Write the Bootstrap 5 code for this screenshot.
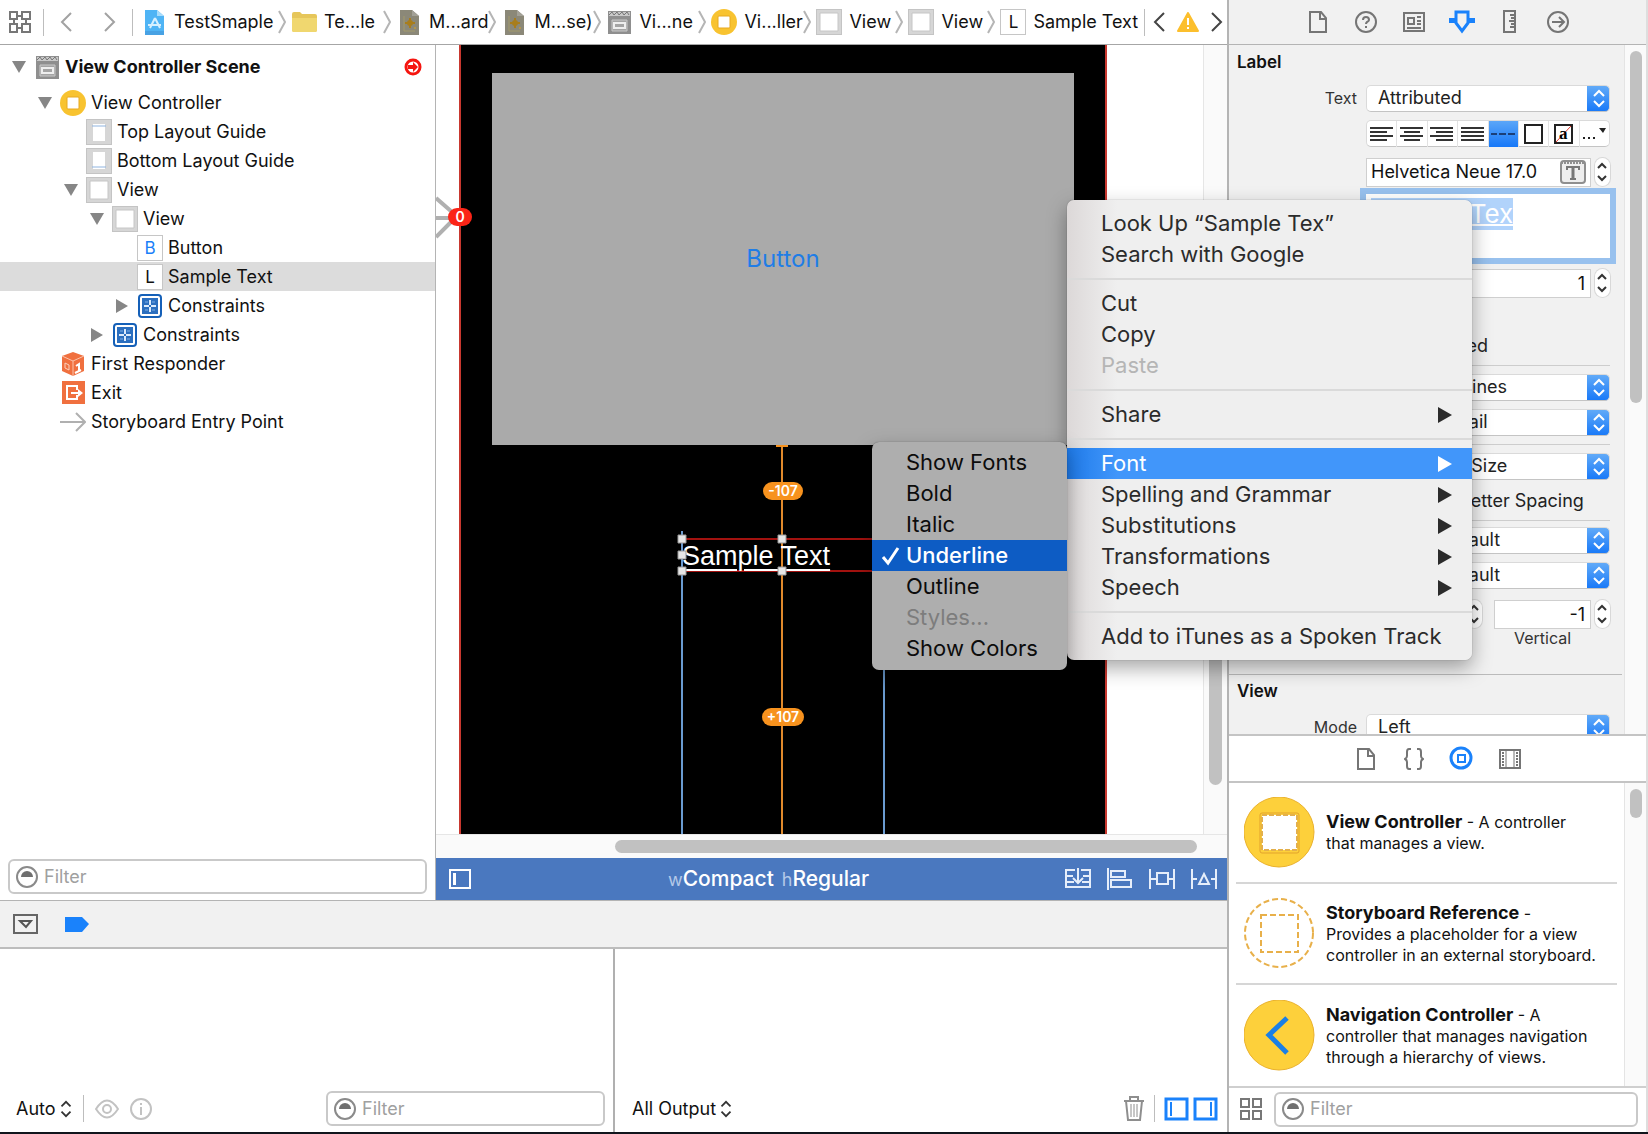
<!DOCTYPE html>
<html lang="en">
<head>
<meta charset="utf-8">
<meta name="viewport" content="width=device-width, initial-scale=1">
<title>TestSmaple – Main.storyboard</title>
<link href="https://cdn.jsdelivr.net/npm/bootstrap@5.3.0/dist/css/bootstrap.min.css" rel="stylesheet">
<style>
:root{--line:#b4b4b4;--chrome:#f1f1f1}
body{font-family:Inter,"Liberation Sans",sans-serif;font-size:18px;line-height:20px;color:#111;background:#fff;overflow:hidden}
svg{display:block;flex:none}
button{font:inherit;color:inherit}
.plain{background:none;border:0;padding:0}
.shell{height:100vh;border-bottom:2px solid #10151c}
.workarea{min-width:0}
.inspector{flex:0 0 420px;border-left:2px solid var(--line);border-right:2px solid #dedede}
.fit{min-height:0}
/* jump bar */
.jump{height:45px;border-bottom:1px solid #a6a6a6;white-space:nowrap;padding-left:9px;padding-right:4px}
.vbar{width:1px;height:27px;background:#bdbdbd;flex:none}
.crumb{flex:0 0 105px;height:27px;color:#111;text-decoration:none}
.crumb-first{flex-basis:150px}
.crumb-view{flex-basis:92px}
.crumb-last{flex-basis:auto}
.slot{width:26px;flex:none;display:flex;justify-content:center}
.crumb .slot,.crumb .tile{margin-right:7px}
.crumb .sep{margin-left:auto;margin-right:5px}
/* outline */
.outline{flex:0 0 436px;border-right:1px solid var(--line)}
.tree-row{height:29px;gap:5px;text-align:left;width:100%;white-space:nowrap}
.tree-row.scene{height:39px;padding:0 13px 3px 12px}
.tree-row .tri{width:14px;height:14px;display:flex;align-items:center;justify-content:center;flex:none}
.tree-row .slot{margin-left:3px}
.lv1{padding-left:38px}.lv2{padding-left:64px}.lv3{padding-left:90px}.lv4{padding-left:115px}
.tree-row.active{background:#dcdcdc}
.tile{width:26px;height:26px;border:1px solid #c6c6c6;background:#fff;display:flex;align-items:center;justify-content:center;font-size:17px;flex:none}
.tile-b{color:#1a7ff9}
.searchbox{height:35px;border:2px solid #c9c9c9;border-radius:6px;background:#fff;padding:0 6px;gap:6px}
.searchbox input{border:0;outline:0;background:none;min-width:0;width:100%;padding:0}
.searchbox input::placeholder{color:#a0a0a0;opacity:1}
.outline .searchbox{margin:0 8px 6px}
.vars .searchbox{width:279px}
/* canvas */
.stage{min-width:0;background:#fff}
.stage-area{overflow:hidden}
.track-x{height:24px;background:#fafafa;border-top:1px solid #e6e6e6;padding:5px 30px 0 179px}
.track-x .thumb{height:13px}
.track-y{width:24px;background:#fafafa;border-left:1px solid #e6e6e6;padding:220px 0 49px 5px}
.track-y .thumb{width:13px}
.thumb{background:#c1c1c1;border-radius:7px}
.phone{left:23px;top:0;width:648px;height:100%;background:#000;border-left:2px solid #c8382f;border-right:2px solid #c8382f}
.grayview{left:56px;top:28px;width:582px;height:372px;background:#aaa;display:flex;align-items:center;justify-content:center}
.grayview button{color:#1f7de6;font-size:24px;line-height:28px}
.sample{left:246px;top:495px;color:#fff;font-family:"Liberation Sans",Arial,sans-serif;font-size:27px;line-height:32px;text-decoration:underline;text-decoration-thickness:2px;text-underline-offset:4px;white-space:nowrap}
.pill{background:#f7921e;color:#fff;border-radius:9px;height:18px;font-size:14px;line-height:18px;font-weight:600;text-align:center;width:42px}
.pill-a{left:327px;top:437px;width:40px}.pill-b{left:326px;top:663px}
.issue{left:12px;top:163px;width:24px;height:18px;border-radius:9px;background:#fb2417;color:#fff;font-size:14px;line-height:18px;font-weight:600;text-align:center}
.sizebar{height:42px;background:#4a78bf;color:#fff;font-size:21px;line-height:24px;font-weight:500;padding:0 10px 0 12px}
.sizebar .dim{font-size:18px;color:#b4c9e8;font-weight:400}
.tools{gap:16px}
/* debug */
.debugbar{height:49px;background:var(--chrome);border-top:1px solid var(--line);border-bottom:2px solid #bdbdbd;padding-left:13px;gap:27px}
.debug{height:183px}
.vars{flex:0 0 615px;border-right:2px solid #b0b0b0;padding:0 8px 6px 16px}
.console{padding:0 9px 6px 17px;min-width:0}
.strip{height:35px;gap:11px}
.console .strip{gap:9px}
/* inspector */
.tabs-top{height:45px;background:var(--chrome);border-bottom:1px solid var(--line);gap:21px;color:#757575}
.tabs-lib{height:47px;border-bottom:2px solid #c4c4c4;gap:21px;color:#757575}
.tabs-top .slot,.tabs-lib .slot{width:27px}
.attrs{background:var(--chrome);overflow:hidden}
.attrs-body{padding:7px 14px 0 8px;min-width:0}
.rail{flex:0 0 22px;background:#fafafa;border-left:1px solid #e4e4e4;padding:6px 4px 0 5px}
.thumb-long{height:352px}
.thumb-short{height:29px}
.head{font-size:17px;font-weight:600;line-height:20px;margin:0}
.frow{gap:9px}
.frow>label,.frow>.lab{flex:0 0 120px;text-align:right;font-size:16px;color:#333}
.frow>.ctl{flex:0 0 244px}
.pick{appearance:none;border:1px solid #dadada;border-bottom-color:#c4c4c4;border-radius:5px;height:27px;width:100%;padding:0 30px 0 11px;background:#fff url("data:image/svg+xml,%3Csvg xmlns='http://www.w3.org/2000/svg' width='23' height='27'%3E%3Cdefs%3E%3ClinearGradient id='g' x2='0' y2='1'%3E%3Cstop stop-color='%2364acf8'/%3E%3Cstop offset='1' stop-color='%231778f8'/%3E%3C/linearGradient%3E%3C/defs%3E%3Cpath fill='url(%23g)' d='M0 0h23v27H0z'/%3E%3Cpath d='M7 11l5-5 5 5M7 16l5 5 5-5' fill='none' stroke='%23fff' stroke-width='2'/%3E%3C/svg%3E") no-repeat right center;background-origin:border-box;color:#222;line-height:20px}
.pick-swatch{padding-left:72px}
.field{height:29px;border:1px solid #cfcfcf;background:#fff;min-width:0;gap:4px}
.field input,.num{border:0;outline:0;padding:0 5px;min-width:0;width:100%;background:none;color:#111}
.field input{padding:0 0 0 4px}
.num{border:1px solid #cfcfcf;background:#fff;height:29px;text-align:right}
.step{width:15px;height:28px;border-radius:8px;background:#fff;border:0;padding:0;box-shadow:0 0 0 1px #d8d8d8;flex:none;display:flex;align-items:center;justify-content:center}
.seg{height:27px;background:#fff;border-radius:5px;border:1px solid #dadada;border-bottom-color:#c4c4c4}
.seg button{flex:1 1 0;height:26px;border:0;border-right:1px solid #e2e2e2;background:none;padding:0;display:flex;align-items:center;justify-content:center}
.seg button:last-child{border-right:0}
.seg button.on{background:linear-gradient(#5ba6f8,#1778f8)}
.rich{height:64px;background:#fff;box-shadow:0 0 0 6px #98c1ee;padding:4px 5px;font-size:26px;line-height:32px;color:#fff;overflow:hidden}
.rich span{background:#b1d3fb;text-decoration:underline;text-decoration-thickness:2px;display:inline-block}
.rule{height:1px;background:#cdcdcd}
.rule-full{margin-left:-8px;margin-right:-12px;background:#bbb}
.caps{padding-right:19px}
.cap{font-size:16px;line-height:18px;width:97px;text-align:center;color:#333}
.chk{height:24px;gap:8px;white-space:nowrap;color:#222}
.chk input{width:17px;height:17px;margin:0}
.t6{margin-top:6px}.t7{margin-top:7px}.t8{margin-top:8px}.t9{margin-top:9px}.t11{margin-top:11px}.t13{margin-top:13px}.t27{margin-top:27px}
/* library */
.library{flex:0 0 393px;border-top:2px solid #c4c4c4;background:#fff}
.libitem{height:101px;margin:0 7px;border-bottom:2px solid #d6d6d6;gap:11px;padding-left:8px;font-size:16px;line-height:21px;color:#111}
.libitem strong{font-size:18px;font-weight:700}
.libfoot{height:46px;border-top:2px solid #cfcfcf;padding:0 8px 2px 11px;gap:12px}
/* context menus */
.ctx{display:block;border:0;min-width:0;border-radius:7px;font-size:22px;line-height:31px;box-shadow:0 8px 20px rgba(0,0,0,.35),0 0 1px rgba(0,0,0,.5);z-index:20}
.ctx .dropdown-item{height:31px;padding:0 20px 0 34px;font-size:22px;line-height:31px;color:#2b2b2b;display:flex;align-items:center;justify-content:space-between}
.ctx .dropdown-item:disabled{color:#b5b5b5}
.ctx .dropdown-divider{height:2px;margin:8px 0;border:0;background:#dadada;opacity:1}
.ctx-main{left:1067px;top:200px;width:405px;padding:8px 0;background:linear-gradient(90deg,#dcd8d8,#efefef 50px)}
.ctx-main .dropdown-item.active{background:linear-gradient(90deg,#1f7bea,#4196fa 50px);color:#fff}
.ctx-sub{left:872px;top:442px;width:195px;padding:5px 0 6px;background:#aeaeae}
.ctx-sub .dropdown-item{color:#0c0c0c}
.ctx-sub .dropdown-item:disabled{color:#7d7d7d}
.ctx-sub .dropdown-item.active{background:#0d5cc4;color:#fff;padding-left:9px;justify-content:flex-start;gap:5px;font-weight:500}
</style>
<script src="https://cdn.jsdelivr.net/npm/bootstrap@5.3.0/dist/js/bootstrap.bundle.min.js"></script>
</head>
<body>
<svg width="0" height="0" class="position-absolute" aria-hidden="true">
<defs>
<symbol id="chev" viewBox="0 0 8 24"><path d="M1 1l6 11-6 11" fill="none" stroke="#b5b5b5" stroke-width="2"/></symbol>
<symbol id="doc" viewBox="0 0 19 25"><path d="M0 0h12l7 6v19H0z" fill="#8b8878"/><path d="M12 0l7 6h-7z" fill="#a3a197"/><path d="M4 6v15h11" fill="none" stroke="#a39a6a"/><circle cx="10" cy="13" r="3" fill="#a87d1c"/><path d="M9 8h2v10H9zM5 12h10v2H5z" fill="#a87d1c"/><circle cx="15" cy="18" r="1" fill="#c09a3c"/></symbol>
<symbol id="clap" viewBox="0 0 23 23"><path d="M0 0h23v23H0z" fill="#8f8f8f"/><path d="M1 1h21v4H1z" fill="#c9c9c9"/><path d="M1 4l3-3 2 3 3-3 2 3 3-3 2 3 3-3 2 3" stroke="#777" fill="none"/><path d="M4 9h15v11H4z" fill="#a4a4a4" stroke="#c8c8c8"/><rect x="6" y="12" width="11" height="5" fill="none" stroke="#eee" stroke-width="2"/></symbol>
<symbol id="vc" viewBox="0 0 26 26"><circle cx="13" cy="13" r="13" fill="#f8c330"/><rect x="7" y="7" width="12" height="12" rx="1" fill="#fff" stroke="#e8a91f"/></symbol>
<symbol id="box" viewBox="0 0 26 26"><path d="M0 0h26v26H0z" fill="#c4c4c4"/><path d="M1 1h24v24H1z" fill="#d6d6d6"/><path d="M4 4h18v18H4z" fill="#fff" stroke="#c6c6c6"/></symbol>
<symbol id="guidetop" viewBox="0 0 26 26"><path d="M0 0h26v26H0z" fill="#c4c4c4"/><path d="M1 1h24v24H1z" fill="#d6d6d6"/><path d="M7 5h12v17H7z" fill="#fff"/><path d="M6 7h14" stroke="#8fb4e0"/></symbol>
<symbol id="guidebot" viewBox="0 0 26 26"><path d="M0 0h26v26H0z" fill="#c4c4c4"/><path d="M1 1h24v24H1z" fill="#d6d6d6"/><path d="M7 4h12v17H7z" fill="#fff"/><path d="M6 19h14" stroke="#8fb4e0"/></symbol>
<symbol id="cons" viewBox="0 0 24 24"><rect width="24" height="24" rx="4" fill="#1560b8"/><rect x="3" y="3" width="18" height="18" rx="1" fill="#2c6fbf" stroke="#fff" stroke-width="2"/><path d="M12 6v12M6 12h12" stroke="#dcebfb" stroke-width="2" stroke-dasharray="5 2"/><path d="M7 8h3M14 8h3M7 16h3M14 16h3" stroke="#7fb0e6"/></symbol>
<symbol id="down" viewBox="0 0 14 12"><path d="M0 0h14L7 12z" fill="#868686"/></symbol>
<symbol id="right" viewBox="0 0 12 14"><path d="M0 0l12 7-12 7z" fill="#868686"/></symbol>
<symbol id="filt" viewBox="0 0 22 22"><circle cx="11" cy="11" r="10" fill="none" stroke="#8a8a8a" stroke-width="2"/><path d="M5 11a6 6 0 0 1 12 0z" fill="#6f6f6f"/></symbol>
<symbol id="updn" viewBox="0 0 12 20"><path d="M1 7l5-5 5 5M1 13l5 5 5-5" fill="none" stroke="#333" stroke-width="2"/></symbol>
<symbol id="stp" viewBox="0 0 11 20"><path d="M1 6l4-4 4 4M1 14l4 4 4-4" fill="none" stroke="#333" stroke-width="2"/></symbol>
<symbol id="page" viewBox="0 0 20 24"><path d="M2 2h11l5 6v14H2z" fill="none" stroke="currentColor" stroke-width="2"/><path d="M12 2v7h6" fill="none" stroke="currentColor" stroke-width="2"/></symbol>
<symbol id="play" viewBox="0 0 14 16"><path d="M0 0l14 8-14 8z" fill="currentColor"/></symbol>
</defs>
</svg>

<div class="shell d-flex">
<div class="workarea d-flex flex-column flex-grow-1">
  <nav class="jump d-flex align-items-center" aria-label="Jump bar">
    <button class="plain me-2" aria-label="Related items"><svg width="22" height="22" viewBox="0 0 22 22" fill="none" stroke="#777" stroke-width="2"><path d="M1 1h7v7H1zM13 1h8v7h-8zM1 13h7v8H1zM13 13h8v8h-8zM8 5h5M8 17h5M5 8v5M17 8v5"/></svg></button>
    <span class="vbar mx-1"></span>
    <button class="plain ms-2 ps-1" aria-label="Back"><svg width="12" height="20" viewBox="0 0 12 20"><path d="M11 1L2 10l9 9" fill="none" stroke="#a2a2a2" stroke-width="2"/></svg></button>
    <button class="plain ms-4 ps-2" aria-label="Forward"><svg width="12" height="20" viewBox="0 0 12 20"><path d="M1 1l9 9-9 9" fill="none" stroke="#a2a2a2" stroke-width="2"/></svg></button>
    <span class="vbar ms-3 me-2"></span>
    <a href="#" class="crumb crumb-first d-flex align-items-center"><span class="slot"><svg width="19" height="25" viewBox="0 0 19 25"><path d="M0 0h12l7 6v19H0z" fill="#4fb4f5"/><path d="M12 0l7 6h-7z" fill="#a8dcfb"/><path d="M10 8L5 18M10 8l5 10M3 15h13" stroke="#d6f0ff" stroke-width="2" fill="none"/><path d="M0 21h19v4H0z" fill="#48a2e4"/></svg></span>TestSmaple<svg class="sep" width="8" height="24"><use href="#chev"/></svg></a>
    <a href="#" class="crumb d-flex align-items-center"><span class="slot"><svg width="25" height="20" viewBox="0 0 25 20"><path d="M0 2q0-2 2-2h6l2 2h13q2 0 2 2v14q0 2-2 2H2q-2 0-2-2z" fill="#e6c65a"/><path d="M0 6h25v12q0 2-2 2H2q-2 0-2-2z" fill="#f0d76f"/></svg></span>Te...le<svg class="sep" width="8" height="24"><use href="#chev"/></svg></a>
    <a href="#" class="crumb d-flex align-items-center"><span class="slot"><svg width="19" height="25"><use href="#doc"/></svg></span>M...ard<svg class="sep" width="8" height="24"><use href="#chev"/></svg></a>
    <a href="#" class="crumb d-flex align-items-center"><span class="slot"><svg width="19" height="25"><use href="#doc"/></svg></span>M...se)<svg class="sep" width="8" height="24"><use href="#chev"/></svg></a>
    <a href="#" class="crumb d-flex align-items-center"><span class="slot"><svg width="23" height="23"><use href="#clap"/></svg></span>Vi...ne<svg class="sep" width="8" height="24"><use href="#chev"/></svg></a>
    <a href="#" class="crumb d-flex align-items-center"><span class="slot"><svg width="26" height="26"><use href="#vc"/></svg></span>Vi...ller<svg class="sep" width="8" height="24"><use href="#chev"/></svg></a>
    <a href="#" class="crumb crumb-view d-flex align-items-center"><span class="slot"><svg width="26" height="26"><use href="#box"/></svg></span>View<svg class="sep" width="8" height="24"><use href="#chev"/></svg></a>
    <a href="#" class="crumb crumb-view d-flex align-items-center"><span class="slot"><svg width="26" height="26"><use href="#box"/></svg></span>View<svg class="sep" width="8" height="24"><use href="#chev"/></svg></a>
    <a href="#" class="crumb crumb-last d-flex align-items-center"><span class="tile">L</span>Sample Text</a>
    <span class="vbar ms-auto me-2"></span>
    <button class="plain" aria-label="Previous issue"><svg width="12" height="20" viewBox="0 0 12 20"><path d="M11 1L2 10l9 9" fill="none" stroke="#444" stroke-width="2"/></svg></button>
    <button class="plain mx-2 px-1" aria-label="Warnings"><svg width="22" height="20" viewBox="0 0 22 20"><path d="M11 1l10 18H1z" fill="#fcbf2d" stroke="#fcbf2d" stroke-width="2" stroke-linejoin="round"/><path d="M10 6h2v7h-2zM10 15h2v2h-2z" fill="#fff"/></svg></button>
    <button class="plain" aria-label="Next issue"><svg width="12" height="20" viewBox="0 0 12 20"><path d="M1 1l9 9-9 9" fill="none" stroke="#444" stroke-width="2"/></svg></button>
  </nav>

  <div class="fit d-flex flex-grow-1">
    <aside class="outline d-flex flex-column">
      <div class="pt-1 flex-grow-1">
        <button class="plain tree-row scene d-flex align-items-center fw-bold"><span class="tri"><svg width="14" height="12"><use href="#down"/></svg></span><span class="slot"><svg width="23" height="23"><use href="#clap"/></svg></span>View Controller Scene
          <svg class="ms-auto" width="18" height="18" viewBox="0 0 18 18"><circle cx="9" cy="9" r="7" fill="#fff" stroke="#f5150f" stroke-width="3"/><path d="M4 7h5V4l5 5-5 5v-3H4z" fill="#f5150f"/></svg></button>
        <button class="plain tree-row lv1 d-flex align-items-center"><span class="tri"><svg width="14" height="12"><use href="#down"/></svg></span><span class="slot"><svg width="26" height="26"><use href="#vc"/></svg></span>View Controller</button>
        <button class="plain tree-row lv2 d-flex align-items-center"><span class="tri"></span><span class="slot"><svg width="26" height="26"><use href="#guidetop"/></svg></span>Top Layout Guide</button>
        <button class="plain tree-row lv2 d-flex align-items-center"><span class="tri"></span><span class="slot"><svg width="26" height="26"><use href="#guidebot"/></svg></span>Bottom Layout Guide</button>
        <button class="plain tree-row lv2 d-flex align-items-center"><span class="tri"><svg width="14" height="12"><use href="#down"/></svg></span><span class="slot"><svg width="26" height="26"><use href="#box"/></svg></span>View</button>
        <button class="plain tree-row lv3 d-flex align-items-center"><span class="tri"><svg width="14" height="12"><use href="#down"/></svg></span><span class="slot"><svg width="26" height="26"><use href="#box"/></svg></span>View</button>
        <button class="plain tree-row lv4 d-flex align-items-center"><span class="tri"></span><span class="slot"><span class="tile tile-b">B</span></span>Button</button>
        <button class="plain tree-row lv4 active d-flex align-items-center"><span class="tri"></span><span class="slot"><span class="tile">L</span></span>Sample Text</button>
        <button class="plain tree-row lv4 d-flex align-items-center"><span class="tri"><svg width="12" height="14"><use href="#right"/></svg></span><span class="slot"><svg width="24" height="24"><use href="#cons"/></svg></span>Constraints</button>
        <button class="plain tree-row lv3 d-flex align-items-center"><span class="tri"><svg width="12" height="14"><use href="#right"/></svg></span><span class="slot"><svg width="24" height="24"><use href="#cons"/></svg></span>Constraints</button>
        <button class="plain tree-row lv1 d-flex align-items-center"><span class="tri"></span><span class="slot"><svg width="24" height="24" viewBox="0 0 24 24"><path d="M12 0l11 4v15l-11 5L1 19V4z" fill="#f0703f"/><path d="M1 4l11 5 11-5M12 9v15" stroke="#fbc3ab" fill="none"/><path d="M15 14l3-2v7M14 21l6-3" stroke="#fff" stroke-width="2" fill="none"/><path d="M4 11l4 2v5l-4-2z" stroke="#fbd0bd" fill="none"/></svg></span>First Responder</button>
        <button class="plain tree-row lv1 d-flex align-items-center"><span class="tri"></span><span class="slot"><svg width="23" height="23" viewBox="0 0 23 23"><path d="M0 0h23v23H0z" fill="#f0703f"/><path d="M15 9V5H5v13h10v-4M9 12h9" stroke="#fff" stroke-width="2" fill="none"/><path d="M16 8l5 4-5 4z" fill="#fff"/></svg></span>Exit</button>
        <button class="plain tree-row lv1 d-flex align-items-center"><span class="tri"></span><span class="slot"><svg width="26" height="20" viewBox="0 0 26 20"><path d="M0 10h24M16 1l9 9-9 9" fill="none" stroke="#b0b0b0" stroke-width="2"/></svg></span>Storyboard Entry Point</button>
      </div>
      <label class="searchbox d-flex align-items-center"><svg width="22" height="22"><use href="#filt"/></svg><input type="text" placeholder="Filter" aria-label="Filter outline"></label>
    </aside>

    <main class="stage d-flex flex-column flex-grow-1">
      <div class="fit d-flex flex-grow-1">
        <div class="stage-area position-relative flex-grow-1">
          <div class="phone position-absolute"></div>
          <div class="grayview position-absolute"><button class="plain">Button</button></div>
          <svg class="position-absolute top-0 start-0" width="700" height="100%">
            <path d="M0 153l16 14M0 173h16M0 192l16-16" stroke="#b0b0b0" stroke-width="4" fill="none"/>
            <path d="M246 486V1200M448 620V1200" stroke="#6a9bd0" stroke-width="2"/>
            <path d="M246 494h202M246 526h202" stroke="#a3120f" stroke-width="2"/>
            <path d="M346 400V1200" stroke="#e08a2c" stroke-width="2"/><path d="M340 400h12v2h-12z" fill="#f7921e"/>
          </svg>
          <div class="sample position-absolute">Sample Text</div>
          <svg class="position-absolute top-0 start-0" width="700" height="600" fill="#e6e6e6" stroke="#999"><path d="M242 490h8v8h-8zM342 490h8v8h-8zM242 506h8v8h-8zM242 522h8v8h-8zM342 522h8v8h-8z"/></svg>
          <span class="pill pill-a position-absolute">-107</span>
          <span class="pill pill-b position-absolute">+107</span>
          <span class="issue position-absolute">0</span>
        </div>
        <div class="track-y d-flex"><div class="thumb"></div></div>
      </div>
      <div class="track-x"><div class="thumb"></div></div>
      <div class="sizebar d-flex align-items-center">
        <button class="plain" aria-label="Show outline"><svg width="24" height="20" viewBox="0 0 24 20"><path d="M2 1h20v18H2z" fill="none" stroke="#fff" stroke-width="2"/><path d="M5 4h3v12H5z" fill="#fff"/></svg></button>
        <button class="plain mx-auto d-flex align-items-baseline gap-2"><span><span class="dim">w</span>Compact</span><span><span class="dim">h</span>Regular</span></button>
        <div class="tools d-flex align-items-center">
          <button class="plain" aria-label="Stack"><svg width="26" height="22" viewBox="0 0 26 22" fill="none" stroke="#e6eefa" stroke-width="2"><path d="M10 2H1v17h24V2h-9M1 8h7M1 14h8M18 8h7M17 14h8M13 0v15M8 10l5 5 5-5"/></svg></button>
          <button class="plain" aria-label="Align"><svg width="26" height="22" viewBox="0 0 26 22" fill="none" stroke="#e6eefa" stroke-width="2"><path d="M1 0v22M4 3h14v6H4zM4 12h20v7H4z"/></svg></button>
          <button class="plain" aria-label="Pin"><svg width="26" height="22" viewBox="0 0 26 22" fill="none" stroke="#e6eefa" stroke-width="2"><path d="M1 1v20M25 1v20M1 11h6M19 11h6M8 5h11v11H8z"/></svg></button>
          <button class="plain" aria-label="Resolve"><svg width="26" height="22" viewBox="0 0 26 22" fill="none" stroke="#e6eefa" stroke-width="2"><path d="M1 1v20M25 1v20M1 11h5M20 11h5M13 6l5 10H8z"/></svg></button>
        </div>
      </div>
    </main>
  </div>

  <div class="debugbar d-flex align-items-center">
    <button class="plain" aria-label="Hide debug area"><svg width="25" height="20" viewBox="0 0 25 20"><path d="M1 1h23v18H1z" fill="none" stroke="#666" stroke-width="2"/><path d="M7 7h11l-5 6z" fill="none" stroke="#555" stroke-width="2"/></svg></button>
    <button class="plain" aria-label="Breakpoints"><svg width="24" height="15" viewBox="0 0 24 15"><path d="M0 0h17l7 7-7 8H0z" fill="#1a82fb"/></svg></button>
  </div>
  <div class="debug d-flex">
    <section class="vars d-flex align-items-end">
      <div class="strip d-flex align-items-center w-100">
        <button class="plain d-flex align-items-center gap-1">Auto <svg width="12" height="18"><use href="#updn"/></svg></button>
        <span class="vbar"></span>
        <button class="plain" aria-label="Quick look"><svg width="24" height="20" viewBox="0 0 24 20" fill="none" stroke="#c2c2c2" stroke-width="2"><path d="M1 10q11-17 22 0q-11 17-22 0z"/><circle cx="12" cy="10" r="4"/></svg></button>
        <button class="plain" aria-label="Info"><svg width="22" height="22" viewBox="0 0 22 22" fill="none" stroke="#c2c2c2" stroke-width="2"><circle cx="11" cy="11" r="10"/><path d="M11 9v8M11 5v2"/></svg></button>
        <label class="searchbox d-flex align-items-center ms-auto"><svg width="22" height="22"><use href="#filt"/></svg><input type="text" placeholder="Filter" aria-label="Filter variables"></label>
      </div>
    </section>
    <section class="console d-flex align-items-end flex-grow-1">
      <div class="strip d-flex align-items-center w-100">
        <button class="plain d-flex align-items-center gap-1">All Output <svg width="12" height="18"><use href="#updn"/></svg></button>
        <button class="plain ms-auto" aria-label="Clear"><svg width="22" height="25" viewBox="0 0 22 25" fill="none" stroke="#8e8e8e" stroke-width="2"><path d="M1 5h20M7 5V1h8v4M3 5l2 19h12l2-19"/><path d="M8 8v13M11 8v13M14 8v13" stroke-width="1"/></svg></button>
        <span class="vbar"></span>
        <span class="d-flex gap-1"><button class="plain" aria-label="Variables"><svg width="25" height="24" viewBox="0 0 25 24"><path d="M2 2h21v20H2z" fill="none" stroke="#1a82fb" stroke-width="3"/><path d="M6 5h2v14H6z" fill="#1a82fb"/></svg></button>
        <button class="plain" aria-label="Console"><svg width="25" height="24" viewBox="0 0 25 24"><path d="M2 2h21v20H2z" fill="none" stroke="#1a82fb" stroke-width="3"/><path d="M17 5h2v14h-2z" fill="#1a82fb"/></svg></button></span>
      </div>
    </section>
  </div>
</div>

<aside class="inspector d-flex flex-column">
  <div class="tabs-top d-flex align-items-center justify-content-center">
    <button class="plain slot" aria-label="File"><svg width="20" height="24"><use href="#page"/></svg></button>
    <button class="plain slot" aria-label="Help"><svg width="22" height="22" viewBox="0 0 22 22" fill="none" stroke="currentColor" stroke-width="2"><circle cx="11" cy="11" r="10"/><path d="M8 9q0-3 3-3t3 3q0 1-2 2-1 1-1 2M11 15v2"/></svg></button>
    <button class="plain slot" aria-label="Identity"><svg width="22" height="20" viewBox="0 0 22 20" fill="none" stroke="currentColor" stroke-width="2"><path d="M1 1h20v18H1z"/><path d="M5 6h6v6H5zM14 5h4M14 9h4M14 12h4M4 16h14"/></svg></button>
    <button class="plain slot" aria-label="Attributes"><svg width="26" height="24" viewBox="0 0 26 24" fill="none" stroke="#1a82fb" stroke-width="3"><path d="M7 2h12v11l-6 8-6-8z"/><path d="M0 8h7v5H0zM19 8h7v5h-7z" fill="#1a82fb" stroke="none"/></svg></button>
    <button class="plain slot" aria-label="Size"><svg width="13" height="23" viewBox="0 0 13 23" fill="none" stroke="currentColor" stroke-width="2"><path d="M1 1h11v21H1zM7 5h5M8 8h4M6 11h6M8 14h4M7 17h5"/></svg></button>
    <button class="plain slot" aria-label="Connections"><svg width="22" height="22" viewBox="0 0 22 22" fill="none" stroke="currentColor" stroke-width="2"><circle cx="11" cy="11" r="10"/><path d="M5 11h11M12 6l5 5-5 5"/></svg></button>
  </div>
  <div class="attrs fit d-flex flex-grow-1">
    <div class="attrs-body flex-grow-1">
      <h2 class="head">Label</h2>
      <div class="frow d-flex align-items-center t13"><label for="f1">Text</label><div class="ctl"><select id="f1" class="pick"><option>Attributed</option></select></div></div>
      <div class="frow d-flex align-items-center t8"><span class="lab"></span><div class="ctl seg d-flex" role="group" aria-label="Alignment">
        <button aria-label="Left"><svg width="24" height="14" viewBox="0 0 24 14" stroke="#333" stroke-width="2"><path d="M0 1h23M0 5h17M0 9h23M0 13h17"/></svg></button>
        <button aria-label="Center"><svg width="24" height="14" viewBox="0 0 24 14" stroke="#333" stroke-width="2"><path d="M0 1h23M4 5h16M0 9h23M4 13h16"/></svg></button>
        <button aria-label="Right"><svg width="24" height="14" viewBox="0 0 24 14" stroke="#333" stroke-width="2"><path d="M0 1h23M6 5h17M0 9h23M6 13h17"/></svg></button>
        <button aria-label="Justified"><svg width="24" height="14" viewBox="0 0 24 14" stroke="#333" stroke-width="2"><path d="M0 1h23M0 5h23M0 9h23M0 13h23"/></svg></button>
        <button class="on" aria-label="Natural"><svg width="24" height="4" viewBox="0 0 24 4" stroke="#1b3f78" stroke-width="2"><path d="M0 2h6M8 2h7M17 2h7"/></svg></button>
        <button aria-label="Text color"><svg width="19" height="20" viewBox="0 0 19 20"><path d="M1 1h17v18H1z" fill="#fff" stroke="#222" stroke-width="2"/></svg></button>
        <button aria-label="Background color"><svg width="19" height="20" viewBox="0 0 19 20"><path d="M2 18L17 2" stroke="#e23b30" stroke-width="1"/><path d="M1 1h17v18H1z" fill="none" stroke="#222" stroke-width="2"/><text x="5" y="15" font-family="Liberation Serif" font-weight="bold" font-size="17">a</text></svg></button>
        <button aria-label="More"><svg width="24" height="16" viewBox="0 0 24 16" fill="#222"><path d="M1 11h2v2H1zM6 11h2v2H6zM11 11h2v2h-2zM17 2h7l-3 5z"/></svg></button>
      </div></div>
      <div class="frow d-flex align-items-center t11"><span class="lab"></span><div class="ctl d-flex align-items-center gap-1"><div class="field d-flex align-items-center flex-grow-1 pe-1"><input type="text" value="Helvetica Neue 17.0" aria-label="Font"><svg width="26" height="24" viewBox="0 0 26 24"><rect x="1" y="1" width="24" height="22" rx="3" fill="#eee" stroke="#8f8f8f" stroke-width="2"/><path d="M1 3h24" stroke="#8f8f8f" stroke-width="2" stroke-dasharray="2 1"/><path d="M7 10V7h12v3M10 19h6" fill="none" stroke="#777" stroke-width="2"/><path d="M13 7v12" stroke="#777" stroke-width="3"/></svg></div><button class="step" aria-label="Font size"><svg width="11" height="20"><use href="#stp"/></svg></button></div></div>
      <div class="frow d-flex t7"><span class="lab"></span><div class="ctl rich" contenteditable="true" role="textbox" aria-label="Attributed text"><span>Sample Tex</span>t</div></div>
      <div class="frow d-flex align-items-center t11"><label for="f2">Lines</label><div class="ctl d-flex align-items-center gap-1"><input id="f2" class="num" type="text" value="1"><button class="step" aria-label="Lines"><svg width="11" height="20"><use href="#stp"/></svg></button></div></div>
      <div class="frow d-flex t8"><span class="lab">Behavior</span><div class="ctl"><label class="chk d-flex align-items-center"><input type="checkbox" checked>Enabled</label></div></div>
      <div class="frow d-flex mt-1"><span class="lab"></span><div class="ctl"><label class="chk d-flex align-items-center"><input type="checkbox">Highlighted</label></div></div>
      <div class="rule t7"></div>
      <div class="frow d-flex align-items-center t8"><label for="f3">Baseline</label><div class="ctl"><select id="f3" class="pick"><option>Align Baselines</option></select></div></div>
      <div class="frow d-flex align-items-center t8"><label for="f4">Line Breaks</label><div class="ctl"><select id="f4" class="pick"><option>Truncate Tail</option></select></div></div>
      <div class="rule t8"></div>
      <div class="frow d-flex align-items-center t8"><label for="f5">Autoshrink</label><div class="ctl"><select id="f5" class="pick"><option>Fixed Font Size</option></select></div></div>
      <div class="frow d-flex t9"><span class="lab"></span><div class="ctl"><label class="chk d-flex align-items-center"><input type="checkbox">Tighten Letter Spacing</label></div></div>
      <div class="rule t7"></div>
      <div class="frow d-flex align-items-center t6"><label for="f6">Highlighted</label><div class="ctl"><select id="f6" class="pick pick-swatch"><option>Default</option></select></div></div>
      <div class="frow d-flex align-items-center t8"><label for="f7">Shadow</label><div class="ctl"><select id="f7" class="pick pick-swatch"><option>Default</option></select></div></div>
      <div class="frow d-flex align-items-center t11"><span class="lab"></span><div class="ctl d-flex align-items-center gap-1"><input class="num" type="text" value="0" aria-label="Horizontal"><button class="step" aria-label="Horizontal"><svg width="11" height="20"><use href="#stp"/></svg></button><span class="ps-1"></span><input id="f9" class="num" type="text" value="-1"><button class="step" aria-label="Vertical"><svg width="11" height="20"><use href="#stp"/></svg></button></div></div>
      <div class="frow d-flex"><span class="lab"></span><div class="ctl caps d-flex justify-content-end"><label for="f9" class="cap">Vertical</label></div></div>
      <div class="rule rule-full t27"></div>
      <h2 class="head t6">View</h2>
      <div class="frow d-flex align-items-center t13"><label for="f8">Mode</label><div class="ctl"><select id="f8" class="pick"><option>Left</option></select></div></div>
    </div>
    <div class="rail"><div class="thumb thumb-long"></div></div>
  </div>

  <div class="library d-flex flex-column">
    <div class="tabs-lib d-flex align-items-center justify-content-center flex-shrink-0">
      <button class="plain slot" aria-label="File templates"><svg width="20" height="24"><use href="#page"/></svg></button>
      <button class="plain slot" aria-label="Code snippets"><svg width="20" height="22" viewBox="0 0 20 22" fill="none" stroke="currentColor" stroke-width="2"><path d="M7 1H5Q3 1 3 4v4q0 2-2 3 2 1 2 3v4q0 3 2 3h2M13 1h2q2 0 2 3v4q0 2 2 3-2 1-2 3v4q0 3-2 3h-2"/></svg></button>
      <button class="plain slot" aria-label="Objects"><svg width="25" height="25" viewBox="0 0 25 25" fill="none" stroke="#1a82fb"><circle cx="12" cy="12" r="10" stroke-width="3"/><path d="M9 9h7v7H9z" stroke-width="2"/></svg></button>
      <button class="plain slot" aria-label="Media"><svg width="22" height="20" viewBox="0 0 22 20" fill="none" stroke="currentColor"><path d="M1 1h20v18H1z" stroke-width="2"/><path d="M4 3v14M18 3v14" stroke-width="2" stroke-dasharray="2 1"/><path d="M7 2v16M15 2v16"/></svg></button>
    </div>
    <div class="d-flex flex-grow-1 overflow-hidden">
      <div class="flex-grow-1">
        <div class="libitem d-flex align-items-center"><svg width="71" height="71" viewBox="0 0 71 71"><circle cx="35" cy="35" r="35" fill="#fdd03b" stroke="#eab12c"/><rect x="16" y="16" width="39" height="40" rx="2" fill="none" stroke="#e3a32c"/><path d="M18 18h35v35H18z" fill="#fff" stroke="#e3b04c" stroke-width="2" stroke-dasharray="5 2"/></svg><div><strong>View Controller</strong> - A controller<br>that manages a view.</div></div>
        <div class="libitem d-flex align-items-center"><svg width="71" height="71" viewBox="0 0 71 71" fill="none" stroke="#e8b04a" stroke-width="2" stroke-dasharray="6 3"><circle cx="35" cy="35" r="34"/><path d="M17 17h37v37H17z"/></svg><div><strong>Storyboard Reference</strong> -<br>Provides a placeholder for a view<br>controller in an external storyboard.</div></div>
        <div class="libitem d-flex align-items-center border-0"><svg width="71" height="71" viewBox="0 0 71 71"><circle cx="35" cy="35" r="35" fill="#fdd03b" stroke="#eab12c"/><path d="M43 18L25 35l18 18" fill="none" stroke="#1a7fe6" stroke-width="5"/></svg><div><strong>Navigation Controller</strong> - A<br>controller that manages navigation<br>through a hierarchy of views.</div></div>
      </div>
      <div class="rail"><div class="thumb thumb-short"></div></div>
    </div>
    <div class="libfoot d-flex align-items-center flex-shrink-0">
      <button class="plain" aria-label="Icon view"><svg width="22" height="22" viewBox="0 0 22 22" fill="none" stroke="#777" stroke-width="2"><path d="M1 1h8v8H1zM13 1h8v8h-8zM1 13h8v8H1zM13 13h8v8h-8z"/></svg></button>
      <label class="searchbox d-flex align-items-center flex-grow-1"><svg width="22" height="22"><use href="#filt"/></svg><input type="text" placeholder="Filter" aria-label="Filter library"></label>
    </div>
  </div>
</aside>
</div>

<ul class="ctx ctx-main dropdown-menu show">
  <li><button class="dropdown-item">Look Up “Sample Tex”</button></li>
  <li><button class="dropdown-item">Search with Google</button></li>
  <li><hr class="dropdown-divider"></li>
  <li><button class="dropdown-item">Cut</button></li>
  <li><button class="dropdown-item">Copy</button></li>
  <li><button class="dropdown-item" disabled>Paste</button></li>
  <li><hr class="dropdown-divider"></li>
  <li><button class="dropdown-item">Share<svg width="14" height="16"><use href="#play"/></svg></button></li>
  <li><hr class="dropdown-divider"></li>
  <li><button class="dropdown-item active">Font<svg width="14" height="16"><use href="#play"/></svg></button></li>
  <li><button class="dropdown-item">Spelling and Grammar<svg width="14" height="16"><use href="#play"/></svg></button></li>
  <li><button class="dropdown-item">Substitutions<svg width="14" height="16"><use href="#play"/></svg></button></li>
  <li><button class="dropdown-item">Transformations<svg width="14" height="16"><use href="#play"/></svg></button></li>
  <li><button class="dropdown-item">Speech<svg width="14" height="16"><use href="#play"/></svg></button></li>
  <li><hr class="dropdown-divider"></li>
  <li><button class="dropdown-item">Add to iTunes as a Spoken Track</button></li>
</ul>
<ul class="ctx ctx-sub dropdown-menu show">
  <li><button class="dropdown-item">Show Fonts</button></li>
  <li><button class="dropdown-item">Bold</button></li>
  <li><button class="dropdown-item">Italic</button></li>
  <li><button class="dropdown-item active"><svg width="20" height="20" viewBox="0 0 20 20"><path d="M2 11l5 6L17 2" fill="none" stroke="#fff" stroke-width="3"/></svg>Underline</button></li>
  <li><button class="dropdown-item">Outline</button></li>
  <li><button class="dropdown-item" disabled>Styles...</button></li>
  <li><button class="dropdown-item">Show Colors</button></li>
</ul>
</body>
</html>
